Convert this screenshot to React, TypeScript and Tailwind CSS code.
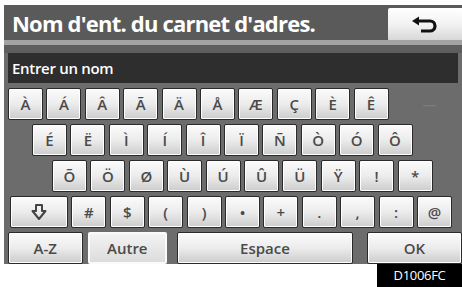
const row1 = ['À', 'Á', 'Â', 'Ã', 'Ä', 'Å', 'Æ', 'Ç', 'È', 'Ê'];
const row2 = ['É', 'Ë', 'Ì', 'Í', 'Î', 'Ï', 'Ñ', 'Ò', 'Ó', 'Ô'];
const row3 = ['Õ', 'Ö', 'Ø', 'Ù', 'Ú', 'Û', 'Ü', 'Ÿ', '!', '*'];
const row4 = ['#', '$', '(', ')', '•', '+', '.', ',', ':', '@'];

const keyCls =
  'h-[32px] flex items-center justify-center rounded-[2px] bg-gradient-to-b from-[#fbfbfb] via-[#ececec] to-[#cccccc] border border-[#2a2a2a] shadow-[inset_0_0_0_1px_#ffffff] text-[#4a4a4a] font-semibold text-[15px]';

function Key({ label, w = 'w-[35px]' }: { label: React.ReactNode; w?: string }) {
  return <div className={`${keyCls} ${w}`}>{label}</div>;
}

function KeyRow({ keys, pad }: { keys: string[]; pad: string }) {
  return (
    <div className={`flex gap-[3.4px] ${pad}`}>
      {keys.map((k) => (
        <Key key={k} label={k} />
      ))}
    </div>
  );
}

function BackIcon() {
  return (
    <svg width="30" height="18" viewBox="0 0 30 18">
      <path d="M2 5 L9 0.5 L9 9.5 Z" fill="#111" />
      <path d="M8 5 H20 a5 5 0 0 1 0 10 H11" fill="none" stroke="#111" strokeWidth="3.2" />
    </svg>
  );
}

function ShiftIcon() {
  return (
    <svg width="16" height="18" viewBox="0 0 16 18">
      <path
        d="M5 2 H11 V8 H14.5 L8 16 L1.5 8 H5 Z"
        fill="none"
        stroke="#444"
        strokeWidth="2"
        strokeLinejoin="round"
      />
    </svg>
  );
}

export default function App() {
  return (
    <div className="w-[462px] h-[287px] bg-white overflow-hidden" style={{ fontFamily: '"Open Sans", "Noto Sans", sans-serif' }}>
      <div className="h-[5px]" />
      <div className="ml-[4px] w-[458px] h-[259px] bg-[#6c6c6c] flex flex-col">
        <div className="h-[35px] bg-[#5a5a5a] flex items-center justify-between">
          <div className="pl-[8px] text-white text-[22px] font-bold tracking-[-0.8px] leading-none">
            Nom d'ent. du carnet d'adres.
          </div>
          <div className="mt-[3px] w-[74px] h-[33px] self-start rounded-l-[2px] bg-gradient-to-b from-[#ffffff] via-[#f2f2f2] to-[#d6d6d6] flex items-center justify-center">
            <BackIcon />
          </div>
        </div>
        <div className="h-[5px] bg-[#a3a3a3]" />
        <div className="h-[8px] bg-[#5e5e5e]" />
        <div className="mx-[4px] h-[30px] bg-[#2e2e2e] flex items-center pl-[4px] text-white text-[15px] font-semibold tracking-[-0.3px]">
          Entrer un nom
        </div>
        <div className="mt-[5px] flex flex-col gap-[4px]">
          <div className="flex items-center">
            <KeyRow keys={row1} pad="pl-[4px]" />
            <div className="ml-[34px] text-[#7c7c7c] text-[14px]">—</div>
          </div>
          <KeyRow keys={row2} pad="pl-[28px]" />
          <KeyRow keys={row3} pad="pl-[48px]" />
          <div className="flex gap-[3.4px] pl-[6px]">
            <Key label={<ShiftIcon />} w="w-[58px]" />
            {row4.map((k) => (
              <Key key={k} label={k} />
            ))}
          </div>
          <div className="flex pl-[4px]">
            <Key label="A-Z" w="w-[75px]" />
            <div className="ml-[5px] w-[80px] h-[32px] flex items-center justify-center rounded-[2px] bg-gradient-to-b from-[#f3f3f3] to-[#dcdcdc] border-2 border-[#fafafa] text-[#4a4a4a] font-semibold text-[15px]">
              Autre
            </div>
            <div className="ml-[10px]">
              <Key label="Espace" w="w-[176px]" />
            </div>
            <div className="ml-[14px]">
              <Key label="OK" w="w-[95px]" />
            </div>
          </div>
        </div>
      </div>
      <div className="flex justify-end">
        <div className="w-[85px] h-[23px] bg-black text-white text-[13px] flex items-center justify-center tracking-[-0.3px]">
          D1006FC
        </div>
      </div>
    </div>
  );
}
